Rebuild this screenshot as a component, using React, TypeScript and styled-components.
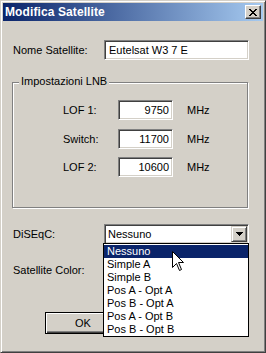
import React from "react";
import styled, { createGlobalStyle } from "styled-components";

const face = "#d4d0c8";

const GlobalStyle = createGlobalStyle`
  html, body {
    margin: 0;
    padding: 0;
    background: ${face};
  }
  body {
    font-family: "Liberation Sans", Arial, sans-serif;
    font-size: 11px;
    color: #000;
  }
`;

const Window = styled.div`
  position: relative;
  box-sizing: border-box;
  width: 266px;
  height: 353px;
  display: flex;
  flex-direction: column;
  padding: 2px;
  background: ${face};
  border: 1px solid;
  border-color: ${face} #404040 #404040 ${face};
  box-shadow: inset 1px 1px 0 #fff, inset -1px -1px 0 #808080;
`;

const TitleBar = styled.div`
  height: 18px;
  display: flex;
  align-items: center;
  justify-content: space-between;
  padding: 0 2px 0 2px;
  background: linear-gradient(to right, #0a246a, #a6caf0);
`;

const Title = styled.span`
  color: #fff;
  font-weight: bold;
  font-size: 12px;
  line-height: 18px;
  letter-spacing: 0.1px;
`;

const CloseButton = styled.button`
  box-sizing: border-box;
  width: 16px;
  height: 14px;
  padding: 0;
  display: flex;
  align-items: center;
  justify-content: center;
  background: ${face};
  border: 1px solid;
  border-color: #fff #404040 #404040 #fff;
  box-shadow: inset -1px -1px 0 #808080;
`;

const Body = styled.div`
  display: flex;
  flex-direction: column;
  padding: 19px 0 0 9px;
`;

const FieldRow = styled.div<{ $top?: number }>`
  display: grid;
  grid-template-columns: 92px 145px;
  align-items: center;
  height: 20px;
  margin-top: ${(p) => p.$top ?? 0}px;
`;

const Label = styled.span<{ $inset?: number }>`
  padding-left: ${(p) => p.$inset ?? 1}px;
  white-space: nowrap;
`;

const TextBox = styled.div<{ $right?: boolean }>`
  box-sizing: border-box;
  height: 20px;
  display: flex;
  align-items: center;
  justify-content: ${(p) => (p.$right ? "flex-end" : "flex-start")};
  padding: ${(p) => (p.$right ? "0 3px 0 0" : "0 0 0 4px")};
  background: #fff;
  border: 1px solid;
  border-color: #808080 #fff #fff #808080;
  box-shadow: inset 1px 1px 0 #404040, inset -1px -1px 0 ${face};
  white-space: nowrap;
`;

const Group = styled.div`
  box-sizing: border-box;
  width: 236px;
  height: 126px;
  margin-top: 22px;
  border: 1px solid #808080;
  box-shadow: 1px 1px 0 #fff, inset 1px 1px 0 #fff;
`;

const Legend = styled.span`
  display: block;
  width: fit-content;
  margin: -8px 0 0 6px;
  padding: 0 2px;
  line-height: 13px;
  background: ${face};
`;

const LnbGrid = styled.div`
  display: grid;
  grid-template-columns: 41px 55px auto;
  grid-auto-rows: 20px;
  row-gap: 8.5px;
  column-gap: 14px;
  align-items: center;
  margin: 12px 0 0 50px;
`;

const Combo = styled.div`
  position: relative;
  box-sizing: border-box;
  height: 20px;
  display: flex;
  align-items: stretch;
  padding: 1px;
  background: #fff;
  border: 1px solid;
  border-color: #808080 #fff #fff #808080;
  box-shadow: inset 1px 1px 0 #404040, inset -1px -1px 0 ${face};
`;

const ComboText = styled.span`
  flex: 1;
  display: flex;
  align-items: center;
  padding-left: 2px;
`;

const ArrowButton = styled.span`
  box-sizing: border-box;
  width: 16px;
  display: flex;
  align-items: center;
  justify-content: center;
  background: ${face};
  border: 1px solid;
  border-color: ${face} #404040 #404040 ${face};
  box-shadow: inset 1px 1px 0 #fff, inset -1px -1px 0 #808080;
`;

const List = styled.div`
  position: absolute;
  top: 18px;
  left: -2px;
  box-sizing: border-box;
  width: 146px;
  height: 94px;
  padding-top: 1px;
  background: #fff;
  border: 1px solid #000;
  z-index: 2;
`;

const Item = styled.div<{ $selected?: boolean }>`
  height: 13px;
  line-height: 13px;
  padding-left: 3px;
  background: ${(p) => (p.$selected ? "#0a246a" : "transparent")};
  color: ${(p) => (p.$selected ? "#fff" : "#000")};
  white-space: nowrap;
`;

const Cursor = styled.svg`
  position: absolute;
  left: 68px;
  top: 7px;
`;

const Buttons = styled.div`
  display: flex;
  margin: 32px 0 0 33px;
`;

const PushButton = styled.button<{ $default?: boolean }>`
  box-sizing: border-box;
  width: 76px;
  height: 22px;
  padding: 0;
  font-family: "Liberation Sans", Arial, sans-serif;
  font-size: 11px;
  color: #000;
  background: ${face};
  border: 1px solid ${(p) => (p.$default ? "#000" : face)};
  box-shadow: inset 1px 1px 0 #fff, inset -1px -1px 0 #404040,
    inset -2px -2px 0 #808080;
`;

const closeX = [
  "XX....XX",
  ".XX..XX.",
  "..XXXX..",
  "...XX...",
  "..XXXX..",
  ".XX..XX.",
  "XX....XX",
];

const CloseGlyph = () => (
  <svg width="8" height="7" viewBox="0 0 8 7" shapeRendering="crispEdges">
    {closeX.flatMap((row, y) =>
      row.split("").map((c, x) =>
        c === "X" ? <rect key={`${x}-${y}`} x={x} y={y} width="1" height="1" fill="#000" /> : null
      )
    )}
  </svg>
);

const options = [
  "Nessuno",
  "Simple A",
  "Simple B",
  "Pos A - Opt A",
  "Pos B - Opt A",
  "Pos A - Opt B",
  "Pos B - Opt B",
];

const lnb = [
  { label: "LOF 1:", value: "9750" },
  { label: "Switch:", value: "11700" },
  { label: "LOF 2:", value: "10600" },
];

export default function App() {
  return (
    <>
      <GlobalStyle />
      <Window>
        <TitleBar>
          <Title>Modifica Satellite</Title>
          <CloseButton aria-label="Chiudi">
            <CloseGlyph />
          </CloseButton>
        </TitleBar>
        <Body>
          <FieldRow>
            <Label>Nome Satellite:</Label>
            <TextBox>Eutelsat W3 7 E</TextBox>
          </FieldRow>

          <Group>
            <Legend>Impostazioni LNB</Legend>
            <LnbGrid>
              {lnb.map((r) => (
                <React.Fragment key={r.label}>
                  <Label $inset={0}>{r.label}</Label>
                  <TextBox $right>{r.value}</TextBox>
                  <span>MHz</span>
                </React.Fragment>
              ))}
            </LnbGrid>
          </Group>

          <FieldRow $top={16}>
            <Label>DiSEqC:</Label>
            <Combo>
              <ComboText>Nessuno</ComboText>
              <ArrowButton>
                <svg width="7" height="4" viewBox="0 0 7 4" shapeRendering="crispEdges">
                  <path d="M0 0h7v1H0zM1 1h5v1H1zM2 2h3v1H2zM3 3h1v1H3z" fill="#000" />
                </svg>
              </ArrowButton>
              <List>
                {options.map((o, i) => (
                  <Item key={o} $selected={i === 0}>
                    {o}
                  </Item>
                ))}
                <Cursor width="13" height="21" viewBox="0 0 13 21">
                  <path
                    d="M0.5 0.5 L0.5 16.5 L4.5 12.5 L7.5 19.5 L9.5 18.5 L6.5 11.5 L11.5 11.5 Z"
                    fill="#fff"
                    stroke="#000"
                    strokeWidth="1"
                  />
                </Cursor>
              </List>
            </Combo>
          </FieldRow>

          <FieldRow $top={16}>
            <Label>Satellite Color:</Label>
            <span />
          </FieldRow>

          <Buttons>
            <PushButton $default>OK</PushButton>
          </Buttons>
        </Body>
      </Window>
    </>
  );
}
